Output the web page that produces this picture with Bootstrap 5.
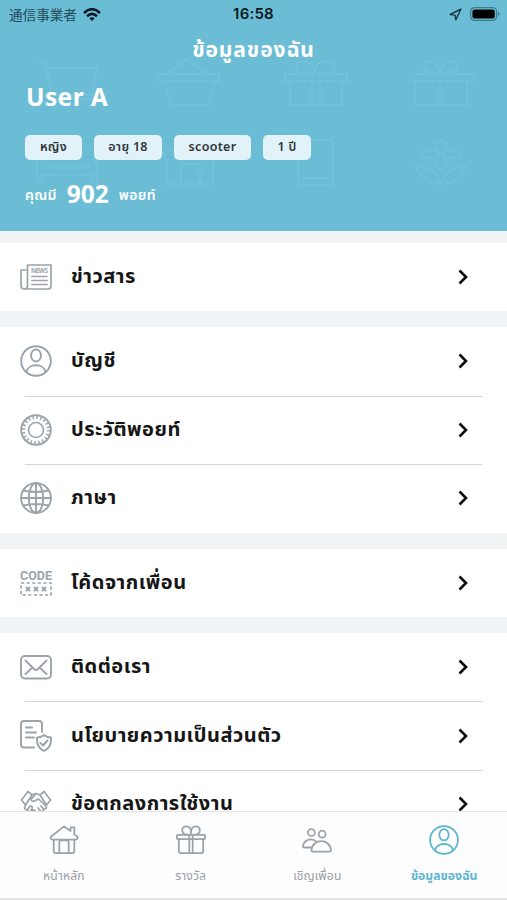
<!DOCTYPE html>
<html lang="th">
<head>
<meta charset="utf-8">
<meta name="viewport" content="width=device-width, initial-scale=1">
<title>ข้อมูลของฉัน</title>
<link href="https://cdn.jsdelivr.net/npm/bootstrap@5.3.0/dist/css/bootstrap.min.css" rel="stylesheet">
<style>
body{font-family:"Noto Sans","Noto Sans Thai","Noto Sans CJK JP",sans-serif;background:#f1f3f5;color:#161616}
.phone{height:900px}
.hero{height:231px;background:#6bbdd6;flex:none}
.hero-art{left:0;top:0;stroke:#82c9de;stroke-width:2;fill:none;opacity:.38}
.status{height:28px;padding:0 7px 0 9px;color:#0b1a20}
.carrier{font:400 13.6px/28px "Noto Sans CJK JP",sans-serif;color:#234b58}
.clock{font:600 15px/28px Inter,sans-serif;left:0;right:0;letter-spacing:.2px}
.title{font-size:21px;line-height:30px;margin-top:6px;letter-spacing:.9px}
.username{font-size:24.5px;line-height:32px;margin:17px 0 0 26px;letter-spacing:.4px}
.chips{gap:12px;margin:22px 0 0 25px}
.chip{height:25px;border-radius:5px;background:#e1f2f9;color:#303638;font-size:12.5px;font-weight:600;letter-spacing:.3px}
.points{margin:16px 0 0 25px;gap:10px;height:36px;font-size:14px;font-weight:600;letter-spacing:.35px}
.points strong{font-size:24.5px;font-weight:700;letter-spacing:0}
.section{background:#fff;margin-bottom:16px;flex:none}
.entry{height:68.6px;padding:0 38px 0 20px;color:#161616}
.entry:only-child{height:68px}
.entry:hover{color:#161616}
.entry+.entry:before{content:"";position:absolute;top:0;left:25px;right:25px;height:1px;background:#d2d4d6}
.entry .label{font-size:20px;font-weight:700;line-height:30px;margin:0 0 2px 19px;letter-spacing:.5px;white-space:nowrap}
.glyph{width:32px;height:32px;fill:none;stroke:#9aa4aa;stroke-width:1.9;stroke-linecap:round;stroke-linejoin:round;flex:none}
.chev{width:12px;height:18px;fill:none;stroke:#0c0c0c;stroke-width:2.6;flex:none}
.tabs{height:89px;background:#fdfdfe;border-top:1px solid #e2e3e4;border-bottom:2px solid #e4e5e7;flex:none}
.tab{color:#9ba0a4;font-size:12.2px;line-height:18px;padding:13px 0 0 1px;letter-spacing:.1px}
.tab .glyph{width:30px;height:30px;margin-bottom:12px}
.tab.on{color:#5bb6d1;font-weight:700;letter-spacing:0}
.tab.on .glyph{stroke:#5bb6d1}
</style>
<script src="https://cdn.jsdelivr.net/npm/bootstrap@5.3.0/dist/js/bootstrap.bundle.min.js"></script>
</head>
<body>
<svg class="d-none">
  <symbol id="person" viewBox="0 0 32 32"><circle cx="16" cy="16" r="14.8"/><ellipse cx="16" cy="10.5" rx="5" ry="6"/><path d="M6.500 27C8 18 24 18 25.500 27"/></symbol>
  <symbol id="chevron" viewBox="0 0 12 18"><path d="M2.500 2.500 9 9l-6.500 6.500"/></symbol>
</svg>
<div class="phone d-flex flex-column overflow-hidden">
  <header class="hero position-relative text-white">
    <svg class="hero-art position-absolute" width="507" height="231" viewBox="0 0 507 231">
      <path d="M38 61l7 2 7 32h40l5-27H46M56 99h36M160 74h59v7h-59zM164 81l8 24h36l8-24M169 73l17-14 21 14"/>
      <path d="M285 74h62v7h-62zM290 81v24h52V81M312 74v31M320 74v31M309 74c-16 0-17-12-6-13 8 0 12 6 12 12 0-7 5-13 13-12 12 2 9 13-5 13"/>
      <path d="M410 74h62v7h-62zM415 81v24h52V81M440 74v31M438 73c-15 0-18-10-10-12 6-1 10 6 12 12 2-6 7-13 13-12 8 2 5 12-10 12"/>
      <path d="M37 159v21h5v-5h50v5h5v-14l-4-8M43 164l6 4h34l7-4M163 153l5-3h43l5 3-3 12v19h-46v-22zM181 184v-20h19v20M298 142q0-2 3-2h29q3 0 3 3v38q0 4-4 4h-27q-4 0-4-4zM298 178h35"/>
      <path d="M440 154c-8-8-5-13 1-13s9 5 1 13c8-6 18-5 18 0s-10 6-18 0c8 9 4 14-1 14s-9-5-1-14c-8 6-18 5-18 0s10-6 18 0M441 184c-14 0-21-8-26-18 14 0 22 6 26 18 4-12 10-17 25-18-4 10-11 18-25 18"/>
    </svg>
    <div class="status position-relative d-flex align-items-center justify-content-between">
      <div class="d-flex align-items-center gap-2">
        <span class="carrier">通信事業者</span>
        <svg style="margin-left:-2px" width="18" height="13" viewBox="0 0 18 13" fill="none" stroke="#0b1a20" stroke-width="2.600"><path d="M1 5Q9-2.500 17 5M4 8.200Q9 3.500 14 8.200"/><path d="M6.300 10.300Q9 8 11.700 10.300L9 13z" fill="#0b1a20" stroke="none"/></svg>
      </div>
      <div class="clock position-absolute text-center">16:58</div>
      <div class="d-flex align-items-center gap-2">
        <svg width="13" height="13" viewBox="0 0 11 11" fill="none" stroke="#17333d" stroke-width="1.200" stroke-linejoin="round"><path d="M1 5.500 10 1 5.800 10 5 6z"/></svg>
        <svg width="30" height="14" viewBox="0 0 30 14"><rect x=".6" y=".6" width="26" height="12.800" rx="4" fill="none" stroke="#3d7a8c" stroke-width="1.200"/><rect x="2.400" y="2.400" width="22.400" height="9.200" rx="2.300" fill="#000"/><path d="M28 4.800q3 2.200 0 4.400z" fill="#3d7a8c"/></svg>
      </div>
    </div>
    <h1 class="title position-relative text-center fw-bold mb-0">ข้อมูลของฉัน</h1>
    <div class="username position-relative fw-bold">User A</div>
    <div class="chips position-relative d-flex">
      <span class="chip d-flex align-items-center justify-content-center" style="width:57px">หญิง</span>
      <span class="chip d-flex align-items-center justify-content-center" style="width:68px">อายุ 18</span>
      <span class="chip d-flex align-items-center justify-content-center" style="width:77px">scooter</span>
      <span class="chip d-flex align-items-center justify-content-center" style="width:48px">1 ปี</span>
    </div>
    <div class="points position-relative d-flex align-items-center"><span>คุณมี</span><strong>902</strong><span>พอยท์</span></div>
  </header>

  <main class="flex-fill overflow-hidden d-flex flex-column" style="min-height:0;padding-top:12px">
    <section class="section">
      <a href="#" class="entry d-flex align-items-center text-decoration-none position-relative">
        <svg class="glyph" viewBox="0 0 32 32"><path d="M7.500 25V4H31v21q0 3-3 3H4.500Q1 28 1 24.500V9h6.500v16q0 3-3 3M12 15.500h15M12 19.500h15M12 23.500h15" stroke-width="1.700"/><text x="11" y="12.300" font-family="Noto Sans" font-weight="700" font-size="6.300" textLength="17" fill="#9aa4aa" stroke="none">NEWS</text></svg>
        <span class="label">ข่าวสาร</span><svg class="chev ms-auto"><use href="#chevron"/></svg></a>
    </section>
    <section class="section">
      <a href="#" class="entry d-flex align-items-center text-decoration-none position-relative">
        <svg class="glyph"><use href="#person"/></svg>
        <span class="label">บัญชี</span><svg class="chev ms-auto"><use href="#chevron"/></svg></a>
      <a href="#" class="entry d-flex align-items-center text-decoration-none position-relative">
        <svg class="glyph" viewBox="0 0 32 32"><circle cx="16" cy="16" r="14.800"/><circle cx="16" cy="16" r="7.500" stroke-width="1.600"/><circle cx="16" cy="16" r="12.500" stroke-width="3" stroke-linecap="butt" stroke-dasharray="1.500 2.427"/></svg>
        <span class="label">ประวัติพอยท์</span><svg class="chev ms-auto"><use href="#chevron"/></svg></a>
      <a href="#" class="entry d-flex align-items-center text-decoration-none position-relative">
        <svg class="glyph" viewBox="0 0 32 32"><circle cx="16" cy="16" r="14.900"/><ellipse cx="16" cy="16" rx="7.200" ry="14.900"/><path d="M16 1v30M1 16h30M3.500 8.500Q16 11.500 28.500 8.500M3.500 23.500Q16 20.500 28.500 23.500"/></svg>
        <span class="label">ภาษา</span><svg class="chev ms-auto"><use href="#chevron"/></svg></a>
    </section>
    <section class="section">
      <a href="#" class="entry d-flex align-items-center text-decoration-none position-relative">
        <svg class="glyph" viewBox="0 0 32 32"><text x="0" y="12.500" font-family="Roboto" font-weight="700" font-size="12.500" textLength="32" fill="#9aa4aa" stroke="none">CODE</text><rect x="1" y="16" width="30" height="12" stroke-dasharray="3.200 2.400" style="stroke-width:1.700;stroke-linecap:butt"/><path d="M6.500 20.500l3 3m0-3-3 3M14.500 20.500l3 3m0-3-3 3M22.500 20.500l3 3m0-3-3 3"/></svg>
        <span class="label">โค้ดจากเพื่อน</span><svg class="chev ms-auto"><use href="#chevron"/></svg></a>
    </section>
    <section class="section">
      <a href="#" class="entry d-flex align-items-center text-decoration-none position-relative">
        <svg class="glyph" viewBox="0 0 32 32"><rect x="1" y="5" width="30" height="22.500" rx="4"/><path d="M5.500 9.500 14 18q2 2 4 0l8.500-8.500M5.500 23l6.500-6M26.500 23 20 17"/></svg>
        <span class="label">ติดต่อเรา</span><svg class="chev ms-auto"><use href="#chevron"/></svg></a>
      <a href="#" class="entry d-flex align-items-center text-decoration-none position-relative">
        <svg class="glyph" viewBox="0 0 32 32"><path d="M14 27.500H4q-3 0-3-3V4q0-3 3-3h15q3 0 3 3v8M6 7.500h6M6 12.500h10M6 17.500h8"/><path d="M24 15q3 2.500 7 2.500c.5 7-1.500 11-7 13.500-5.500-2.500-7.500-6.500-7-13.500q4 0 7-2.500zM20.500 23l2.500 2.500 4.500-5"/></svg>
        <span class="label">นโยบายความเป็นส่วนตัว</span><svg class="chev ms-auto"><use href="#chevron"/></svg></a>
      <a href="#" class="entry d-flex align-items-center text-decoration-none position-relative">
        <svg class="glyph" viewBox="0 0 32 32" style="stroke-width:1.700"><path d="M8 3.500 1.500 12l4 5L12 7zM24 3.500l6.500 8.500-4 5L20 7zM11.500 7l4-1.500L20 7M15.500 6 11 11.500q1 3 4.500 1l3-1.500 8 7.500q0 3-3 2.500 0 3-3 3-1 3-4 2M5.500 17l-1 3q1 3 3.500 1M8 21l2-3q3 0 2 3l-2 3q-3 0-2-3zM11 24l2-2q3 0 2 3l-2 2q-3 0-2-3zM21 18l2.500 3M18 20l2.500 3"/></svg>
        <span class="label">ข้อตกลงการใช้งาน</span><svg class="chev ms-auto"><use href="#chevron"/></svg></a>
    </section>
  </main>

  <nav class="tabs d-flex">
    <a href="#" class="tab col-3 d-flex flex-column align-items-center text-decoration-none">
      <svg class="glyph" viewBox="0 0 32 32"><path d="M5 15.500V28q0 2 2 2h18q2 0 2-2V15.500M2 12.500 16 1.500l7 5V2.500h4V10l3.500 2.500q.5 3-2.500 3H4q-3 0-2-3zM11 30V19q0-2.500 2.500-2.500h5Q21 16.500 21 19v11"/></svg><span>หน้าหลัก</span></a>
    <a href="#" class="tab col-3 d-flex flex-column align-items-center text-decoration-none">
      <svg class="glyph" viewBox="0 0 32 32"><path d="M3 15v13q0 2 2 2h22q2 0 2-2V15"/><rect x="1" y="10.500" width="30" height="4.500" rx="1"/><path d="M14.200 10.500V30M17.800 10.500V30M12 10.500C4 9 6 1.500 11 1.500c3.500 0 5 3 5 6 0-3 1.500-6 5-6 5 0 7 7.500-1 9M16 7v3"/></svg><span>รางวัล</span></a>
    <a href="#" class="tab col-3 d-flex flex-column align-items-center text-decoration-none">
      <svg class="glyph" viewBox="0 0 32 32"><circle cx="10" cy="8" r="3.700"/><circle cx="21.500" cy="9.700" r="3.700"/><path d="M14.500 17C9 13.500 1.500 16 1 23q0 1 1 1h7.500M10 27c1-13 20-13 21 0q0 1.500-1.500 1.500h-18Q10 28.500 10 27z"/></svg><span>เชิญเพื่อน</span></a>
    <a href="#" class="tab on col-3 d-flex flex-column align-items-center text-decoration-none">
      <svg class="glyph"><use href="#person"/></svg><span>ข้อมูลของฉัน</span></a>
  </nav>
</div>
</body>
</html>
